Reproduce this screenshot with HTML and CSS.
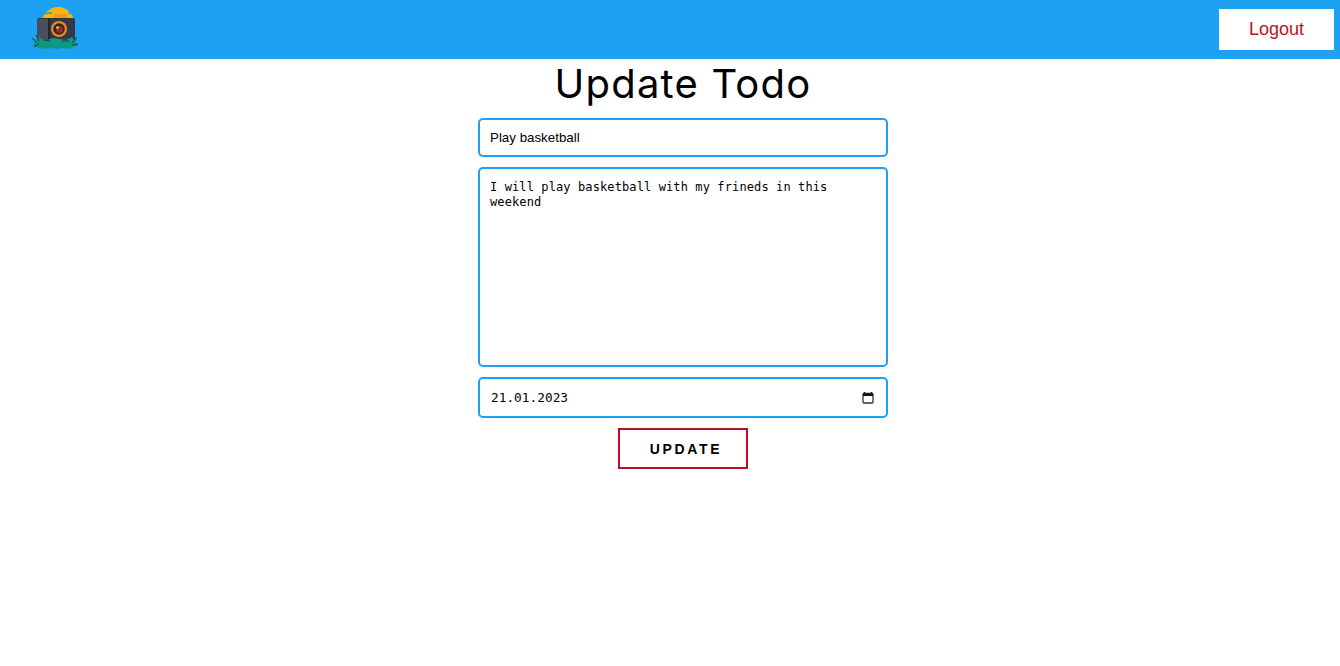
FILE: index.html
```html
<!DOCTYPE html>
<html lang="en">

<head>
    <meta charset="UTF-8">
    <title>Update Todo</title>
    <link rel="stylesheet" href="styles.css">
</head>

<body>
    <header class="nav">
        <a class="logo" href="#">
            <svg width="50" height="50" viewBox="0 0 50 50">
                <circle cx="28" cy="21" r="16" fill="#f5b70f" />
                <path d="M10 10.5h12v1.5H9zM38 10.5h9v1.5H38z" fill="#1da1f2" />
                <path d="M7 16h38v24H7z" fill="#1da1f2" opacity="0" />
                <path d="M23 16l1-4h12l2 4z" fill="#ef9a1a" />
                <rect x="7" y="16" width="38" height="25" rx="2" fill="#343744" />
                <rect x="7" y="17" width="11" height="23" fill="#4b4e5c" />
                <rect x="18" y="16" width="2" height="25" fill="#23252f" />
                <circle cx="29" cy="27" r="8" fill="#ea8d14" />
                <circle cx="29" cy="27" r="5.8" fill="#33222c" />
                <circle cx="29.5" cy="27.5" r="3.6" fill="#8f3324" />
                <circle cx="27.5" cy="25.5" r="1.3" fill="#eec5a8" />
                <path d="M3 35l3 3 2-3 4 2 5 1 6-2 6 1 7 1 6-3 2 3 3-3-1 5 2 4-5 1-3 2-7-1-6 1-7-1-6 1-6-1-5-3 2-3z" fill="#0e9883" />
                <path d="M2 36l5 5M6 33l3 6M47 35l-5 6M48 42l-6 1M4 45l5-3M14 38l6 1M32 39l7 0" stroke="#12404a" stroke-width="1" fill="none" />
            </svg>
        </a>
        <button class="logout" type="button">Logout</button>
    </header>

    <main class="page">
        <h1 class="title">Update Todo</h1>
        <form class="todo-form">
            <input class="field field-title" type="text" value="Play basketball">
            <textarea class="field field-desc">I will play basketball with my frineds in this weekend</textarea>
            <div class="field field-date">
                <input class="date-text" type="text" value="21.01.2023">
                <svg class="date-icon" width="14" height="14" viewBox="0 0 14 14">
                    <path d="M3.5 1v2M10.5 1v2" stroke="#111" stroke-width="1.5" />
                    <rect x="2" y="2.5" width="10" height="9.5" rx="1" fill="none" stroke="#333" stroke-width="1.3" />
                    <rect x="2" y="2.5" width="10" height="2.5" fill="#111" />
                </svg>
            </div>
            <button class="update" type="button">UPDATE</button>
        </form>
    </main>
</body>

</html>
```

FILE: styles.css
```css
* {
    box-sizing: border-box;
}

body {
    margin: 0;
    background: #fff;
    font-family: "Liberation Sans", Arial, sans-serif;
}

.nav {
    display: flex;
    justify-content: space-between;
    align-items: center;
    height: 59px;
    padding: 0 6px 0 30px;
    background: #1da1f2;
}

.logo {
    display: block;
    height: 50px;
    margin-top: -5px;
}

.logout {
    width: 115px;
    height: 41px;
    border: none;
    background: #fff;
    color: #b8141f;
    font-family: "Liberation Sans", Arial, sans-serif;
    font-size: 18px;
}

.page {
    display: flex;
    flex-direction: column;
    align-items: center;
    padding-left: 26px;
}

.title {
    margin: 0;
    height: 59px;
    color: #000;
    font-family: Inter, sans-serif;
    font-size: 40px;
    font-weight: 400;
    letter-spacing: 1.2px;
    line-height: 50px;
}

.todo-form {
    display: flex;
    flex-direction: column;
    align-items: center;
    gap: 10px;
    width: 410px;
}

.field {
    display: block;
    width: 100%;
    border: 2px solid #1da1f2;
    border-radius: 5px;
    outline: none;
    background: #fff;
    color: #000;
}

.field-title {
    height: 39px;
    padding: 0 10px;
    font-family: "Liberation Sans", Arial, sans-serif;
    font-size: 13.33px;
}

.field-desc {
    height: 200px;
    padding: 11px 10px 9px;
    resize: none;
    font-family: "DejaVu Sans Mono", monospace;
    font-size: 12px;
    letter-spacing: 0.11px;
    line-height: 15px;
}

.field-date {
    display: flex;
    align-items: center;
    height: 41px;
    padding: 0 11px 0 11px;
}

.date-text {
    flex: 1;
    min-width: 0;
    padding: 0;
    border: none;
    outline: none;
    color: #000;
    font-family: "DejaVu Sans Mono", monospace;
    font-size: 12.8px;
}

.update {
    width: 130px;
    height: 41px;
    padding: 0 0 0 6px;
    border: 2px solid #b80f2a;
    background: #fff;
    color: #000;
    font-family: "Liberation Sans", Arial, sans-serif;
    font-size: 14px;
    font-weight: 700;
    letter-spacing: 2.7px;
}
```
